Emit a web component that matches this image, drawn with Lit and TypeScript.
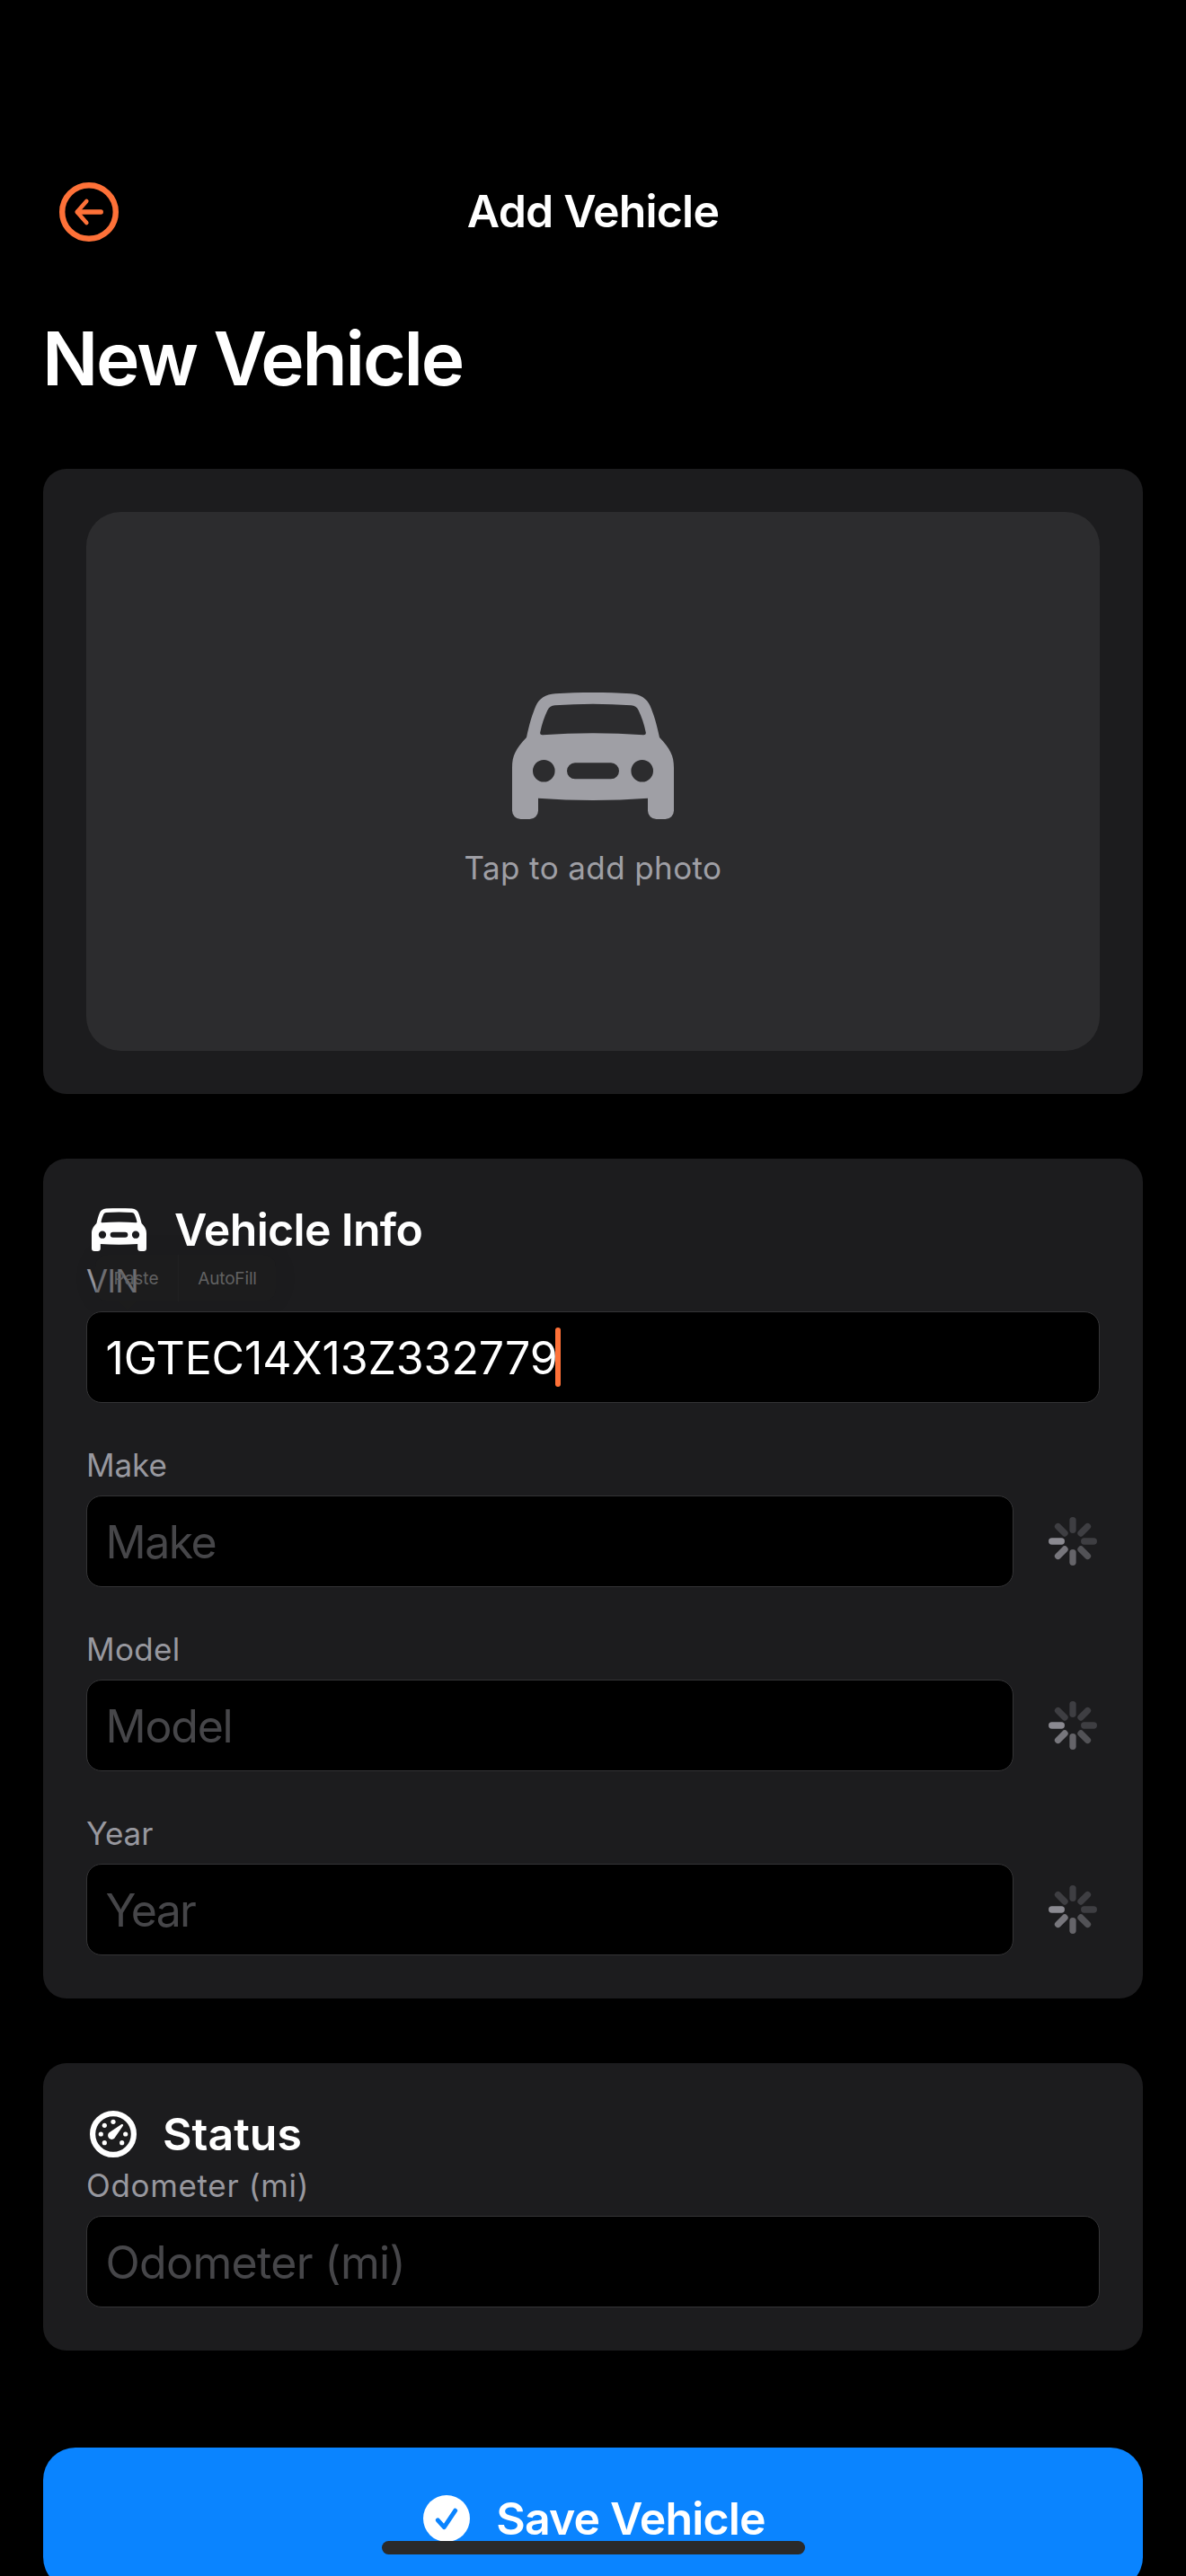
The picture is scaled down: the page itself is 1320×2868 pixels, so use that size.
import { LitElement, html, css, svg, nothing } from "lit";
import { customElement, property } from "lit/decorators.js";
import { styleMap } from "lit/directives/style-map.js";

const carIcon = html`<svg class="car" viewBox="0 0 180 141" fill="currentColor" fill-rule="evenodd">
  <path d="M0 84C0 70 4 63 16 50C19 36 22 25 26.7 14.3C30 7 37 2 48 1.2C75 -.3 105 -.3 132 1.2C143 2 150 7 153.3 14.3C158 25 161 36 164 50C176 63 180 70 180 84V131.5A9.5 9.5 0 0 1 170.5 141H160.5A9.5 9.5 0 0 1 151 131.5V117.7Q90 122.2 29 117.7V131.5A9.5 9.5 0 0 1 19.5 141H9.5A9.5 9.5 0 0 1 0 131.5Z
    M34 47.3Q90 43.4 146 47.3Q149.3 47.5 148.8 44.5C147 35 144 27 140.5 19.5Q138 14.8 132.5 14.3Q90 11.2 47.5 14.3Q42 14.8 39.5 19.5C36 27 33 35 31.2 44.5Q30.7 47.5 34 47.3Z
    M23 87.3a12.3 12.3 0 1 0 24.6 0a12.3 12.3 0 1 0 -24.6 0Z
    M132.4 87.3a12.3 12.3 0 1 0 24.6 0a12.3 12.3 0 1 0 -24.6 0Z
    M70 78.3H110a9 9 0 0 1 0 18H70a9 9 0 0 1 0 -18Z"/>
</svg>`;

const gaugeDots = [[0, -13.7], [-9.7, -9.7], [-13.7, 0], [-9.7, 9.7], [9.7, 9.7], [13.7, 0]];
const gaugeIcon = html`<svg class="gauge" viewBox="-26 -26 52 52" fill="currentColor">
  <circle r="22.9" fill="none" stroke="currentColor" stroke-width="6.2"/>
  ${gaugeDots.map(([x, y]) => svg`<circle cx=${x} cy=${y} r="2.6"/>`)}
  <path d="M9.3 -10.9Q10.7 -11.5 11.1 -10.3Q11.2 -9.7 10.9 -9.3L2.3 3.3A4.3 4.3 0 1 1 -3.7 -2.2Z"/>
</svg>`;

const spokes = ["#3e3e42", "#3e3e42", "#3e3e42", "#525256", "#656469", "#77767c", "#8b8a91", "#3e3e42"];
const spinner = html`<svg class="spinner" viewBox="-30 -30 60 60" stroke-width="7.3" stroke-linecap="round">
  ${spokes.map((c, i) => svg`<line y1="-12.7" y2="-23.3" stroke=${c} transform="rotate(${i * 45})"/>`)}
</svg>`;

@customElement("form-field")
export class FormField extends LitElement {
  @property() label = "";
  @property() value = "";
  @property({ type: Boolean }) loading = false;
  @property({ type: Number }) labelTracking = 0;
  @property({ type: Number }) textTracking = 0;

  static styles = css`
    :host { display: flex; flex-direction: column; gap: 13px; }
    .label { font-size: 35px; line-height: 42px; color: #98989f; white-space: nowrap; }
    .row { display: flex; align-items: center; gap: 36px; }
    .input {
      flex: 1; height: 102px; box-sizing: border-box; display: flex; align-items: center;
      padding: 0 20.5px; border: 1px solid #343436; border-radius: 17px; background: #000;
      font-size: 50px; line-height: 60px; white-space: nowrap;
    }
    .text { color: #fff; padding-top: 2px; }
    .placeholder { color: #464649; }
    .caret { width: 6px; height: 66px; border-radius: 3px; background: #fe7138; margin-left: -2.5px; }
    .spinner { width: 60px; height: 60px; display: block; flex: none; }
  `;

  render() {
    return html`
      <div class="label" style=${styleMap({ letterSpacing: `${this.labelTracking}px` })}>${this.label}</div>
      <div class="row">
        <div class="input">
          <span class="text ${this.value ? "" : "placeholder"}"
            style=${styleMap({ letterSpacing: `${this.textTracking}px` })}>${this.value || this.label}</span>
          ${this.value ? html`<span class="caret"></span>` : nothing}
        </div>
        ${this.loading ? spinner : nothing}
      </div>`;
  }
}

@customElement("app-root")
export class AppRoot extends LitElement {
  static styles = css`
    :host {
      display: block; height: 2868px; overflow: hidden; position: relative; box-sizing: border-box;
      padding: 203px 48px 0; background: #000; color: #fff;
      font-family: Inter, "Liberation Sans", sans-serif;
    }
    svg { display: block; flex: none; }
    .nav { display: grid; grid-template-columns: 66px 1fr 66px; align-items: center; height: 66px; padding: 0 18px; }
    .back { width: 66px; height: 66px; color: #fe7138; }
    .nav-title {
      text-align: center; font-size: 50px; line-height: 60px; font-weight: 600;
      letter-spacing: -0.8px; padding-bottom: 2px;
    }
    h1 { margin: 81px 0 72px -1px; font-size: 82px; line-height: 100px; font-weight: 600; letter-spacing: -2.15px; }
    .card { background: #1c1c1e; border-radius: 26px; padding: 48px; position: relative; }
    .card + .card { margin-top: 72px; }
    .photo {
      height: 600px; box-sizing: border-box; padding-top: 201px; border-radius: 38px; background: #2c2c2e;
      display: flex; flex-direction: column; align-items: center; gap: 33px;
      color: #9f9fa5; font-size: 35px; line-height: 42px; letter-spacing: 0.4px;
    }
    .photo .car { width: 180px; height: 141px; }
    .head { display: flex; align-items: center; height: 62px; margin-bottom: 5px; font-size: 50px; line-height: 60px; font-weight: 600; }
    .head .car { width: 61px; height: 48px; margin: 0 31px 0 6px; }
    .head .gauge { width: 52px; height: 52px; margin: 0 29px 0 4px; }
    .tight { letter-spacing: -0.67px; }
    .fields { display: flex; flex-direction: column; gap: 48px; }
    .menu {
      position: absolute; left: 58px; top: 107px; width: 201px; height: 52px; display: flex;
      border-radius: 14px; background: rgba(30, 30, 30, 0.35); box-shadow: 0 0 30px rgba(0, 0, 0, 0.06);
      color: #616162; font-size: 19px; line-height: 53px;
    }
    .menu::after {
      content: ""; position: absolute; left: 26px; top: 52px;
      border: 10px solid transparent; border-top-color: rgba(29, 29, 29, 0.8); border-bottom: 0;
    }
    .item { box-sizing: border-box; text-align: center; }
    .paste { width: 93px; padding-right: 1px; border-right: 1px solid rgba(255, 255, 255, 0.02); }
    .autofill { width: 108px; letter-spacing: -0.15px; }
    .save {
      margin-top: 108px; height: 158px; border-radius: 36px; background: #0a84ff; box-sizing: border-box;
      display: flex; align-items: center; justify-content: center; gap: 29px; padding-left: 3px;
      font-size: 50px; line-height: 60px; font-weight: 600; letter-spacing: -0.85px;
    }
    .save svg { width: 52px; height: 52px; }
    .home { position: absolute; left: 425px; top: 2829px; width: 471px; height: 15px; border-radius: 8px; background: #2a2a2a; }
  `;

  render() {
    return html`
      <div class="nav">
        <svg class="back" viewBox="-33 -33 66 66" fill="none" stroke="currentColor" stroke-linecap="round" stroke-linejoin="round">
          <circle r="29.8" stroke-width="6.4"/>
          <path d="M-12.5 0H13.3" stroke-width="5.3"/>
          <path d="M-2.7 -12L-13.3 0L-2.7 12" stroke-width="4.6"/>
        </svg>
        <div class="nav-title">Add Vehicle</div>
      </div>
      <h1>New Vehicle</h1>

      <div class="card">
        <div class="photo">${carIcon}<span>Tap to add photo</span></div>
      </div>

      <div class="card">
        <div class="head">${carIcon}<span class="tight">Vehicle Info</span></div>
        <div class="fields">
          <form-field label="VIN" value="1GTEC14X13Z332779" .labelTracking=${-0.6} .textTracking=${-0.1}></form-field>
          <form-field label="Make" loading .labelTracking=${-0.1} .textTracking=${-1.5}></form-field>
          <form-field label="Model" loading .labelTracking=${0.3} .textTracking=${-1.2}></form-field>
          <form-field label="Year" loading .labelTracking=${-0.1} .textTracking=${-1.8}></form-field>
        </div>
        <div class="menu">
          <span class="item paste">Paste</span><span class="item autofill">AutoFill</span>
        </div>
      </div>

      <div class="card">
        <div class="head">${gaugeIcon}<span>Status</span></div>
        <form-field label="Odometer (mi)" .labelTracking=${0.67} .textTracking=${-0.65}></form-field>
      </div>

      <div class="save">
        <svg viewBox="-26 -26 52 52">
          <circle r="26" fill="#fff"/>
          <path d="M-9.7 1.8L-2.7 9.6L9.7 -8.8" fill="none" stroke="#0a84ff" stroke-width="4.9" stroke-linecap="round" stroke-linejoin="round"/>
        </svg>
        <span>Save Vehicle</span>
      </div>
      <div class="home"></div>
    `;
  }
}
